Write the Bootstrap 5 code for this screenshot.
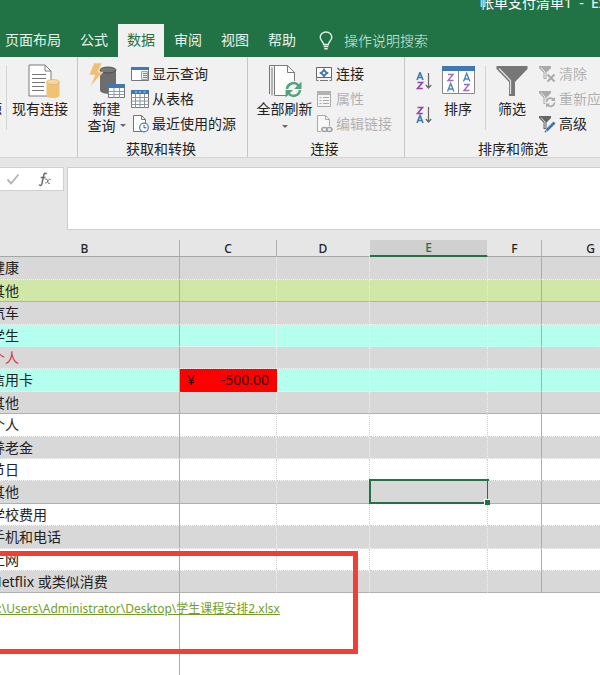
<!DOCTYPE html>
<html lang="zh-CN">
<head>
<meta charset="utf-8">
<meta name="viewport" content="width=device-width, initial-scale=1">
<title>帐单支付清单1 - Excel</title>
<link href="https://cdn.jsdelivr.net/npm/bootstrap@5.3.0/dist/css/bootstrap.min.css" rel="stylesheet">
<style>
body{font-family:"Noto Sans","Noto Sans CJK SC",sans-serif;font-size:14px;line-height:17px;color:#222;background:#fff}
button{font:inherit;color:inherit;background:none;border:0;padding:0;white-space:nowrap}
svg{display:block;flex:none}
.app-head{background:#217346;color:#fff}
.app-title{height:24px;margin-left:80%;line-height:6px;overflow:hidden}
.tab-strip{gap:1px;margin-left:-4px;height:33px}
.tab-strip .nav-link{padding:7px 9px 9px;color:#eaf4ee;line-height:17px;border-radius:0}
.tab-strip .nav-link.active{background:#f1f1f1;color:#217346}
.tell-me{gap:11px;margin-left:13px;padding-bottom:1px;color:#dcebe2;font-weight:300}
.ribbon{background:#f1f1f1;border-bottom:1px solid #d4d4d4;height:101px}
.ribbon-group{flex:none;padding-top:4px}
.ribbon-group + .ribbon-group{border-left:1px solid #c6c6c6}
.g-source{width:117px;margin-left:-40px}
.g-query{width:170px}
.g-link{width:157px}
.g-sort{width:220px}
.g-query .group-body{padding-left:4px}
.g-link .group-body{padding-left:6px}
.g-sort .group-body{padding-left:10px}
.group-body{height:79px}
.group-name{height:17px;padding-right:3px}
.big-btn{display:flex;flex-direction:column;align-items:center;flex:none}
.big-icon{height:39px;display:flex;align-items:center}
.w-src{width:42px}.w-conn{width:66px}.w-new{width:49px}.w-refresh{width:61px}.w-sort{width:46px}.w-filter{width:52px}
.w-conn .big-icon{padding-left:8px}
.inner-rule{width:1px;height:64px;margin-top:5px;background:#d4d4d4}
.small-btn{display:flex;align-items:center;gap:3px;height:25px}
.small-btn:disabled{color:#b1b1b1}
.az-col{width:20px;gap:16px;padding:11px 1px 0}
.caret{width:0;height:0;border:3px solid transparent;border-top-color:#666;border-bottom:0}
.formula{background:#e6e6e6;padding:9px 0 10px;gap:3px}
.fx-box{width:64px;height:24px;background:#fff;border:1px solid #d0d0d0;border-left:0;padding:0 11px 0 6px}
.formula-input{height:63px;resize:none;border:1px solid #cfcfcf;border-right:0;background:#fff;border-radius:0;outline:0;min-width:0}
.sheet{overflow:hidden;position:relative}
.grid{table-layout:fixed;border-collapse:separate;border-spacing:0;width:calc(100% + 50px);margin-left:-10px}
.c-b{width:190px}.c-c{width:97px}.c-d{width:93px}.c-e{width:118px}.c-f{width:54px}
.grid th{background:#e6e6e6;height:17px;padding:0;text-align:center;font-weight:500;font-size:12px;line-height:15px;border-bottom:1px solid #a6a6a6;border-right:1px solid #e6e6e6;color:#222}
.grid thead th.edge{border-right-color:#b0b0b0}
.grid thead th.picked{background:#d0d0d0;color:#217346;border-bottom:2px solid #217346}
.grid td{height:22px;padding:0 0 0 1px;line-height:20px;white-space:nowrap;border-right:1px dotted #ccc;border-bottom:1px dotted #ccc;position:relative}
.grid tbody tr:nth-child(5n+1) td,.grid tbody tr:nth-child(5n+3) td{height:23px}
.grid tbody td:first-child,.grid tbody td:nth-child(5){border-right:1px solid #adadad}
.grid .r-gray td{background:#d8d8d8;border-color:#f2f2f2}
.grid .r-green td{background:#d0e7a7;border-color:#e8f2d8}
.grid .r-aqua td{background:#b5ffee;border-color:#e6f8f4}
.grid .r-rule td{border-bottom:1px solid #b0b0b0}
.grid tbody td.overdue{background:#f00;color:#300;border-color:#f00;padding:0 7px}
.grid td.cursor-cell::after{content:"";position:absolute;inset:-2px -2px -1px -1px;border:2px solid #217346}
.grid td.cursor-cell::before{content:"";position:absolute;right:-3px;bottom:-2px;width:6px;height:6px;background:#217346;border:1px solid #fff;border-width:1px 0 0 1px;z-index:1}
.grid tbody .r-file td,.grid tbody .r-open td{border-bottom:0;border-right-color:transparent}
.grid tbody .r-file td:first-child,.grid tbody .r-open td:first-child{border-right-color:#adadad}
.grid tbody tr.r-file:nth-child(n) td{height:32px;font-size:12px}
.grid tbody tr.r-open:nth-child(n) td{height:51px}
.file-link{color:#6f9f25}
.callout{position:absolute;left:-5px;top:311px;width:363px;height:103px;border:5px solid #f33e38;pointer-events:none}
</style>
</head>
<body>
<header class="app-head overflow-hidden">
  <div class="app-title text-nowrap">帐单支付清单1&nbsp; - &nbsp;Excel</div>
  <nav class="tab-strip nav flex-nowrap text-nowrap">
    <a class="nav-link" href="#">页面布局</a><a class="nav-link" href="#">公式</a><a class="nav-link active" href="#">数据</a><a class="nav-link" href="#">审阅</a><a class="nav-link" href="#">视图</a><a class="nav-link" href="#">帮助</a>
    <button class="tell-me d-flex align-items-center" type="button">
      <svg width="14" height="19" viewBox="0 0 14 19" fill="none" stroke="#e6f2eb" stroke-width="1.4"><path d="M4.6 13.5C4.6 10.8 1.2 9.6 1.2 6.3a5.8 5.3 0 0 1 11.6 0c0 3.3-3.4 4.500-3.400 7.200zM4.600 15.500h4.800M5.300 17.700h3.400"/></svg>
      操作说明搜索</button>
  </nav>
</header>

<section class="ribbon d-flex overflow-hidden" aria-label="数据">
  <div class="ribbon-group g-source">
    <div class="group-body d-flex">
      <button class="big-btn w-src" type="button"><span class="big-icon"></span>其他源</button>
      <span class="inner-rule ms-auto"></span>
      <button class="big-btn w-conn me-1" type="button"><span class="big-icon">
        <svg width="32" height="34" viewBox="0 0 32 34"><path d="M1 1h16l6 6v25H1z" fill="#fff" stroke="#7b7b7b"/><path d="M17 1v6h6" fill="none" stroke="#7b7b7b"/><path d="M4 10.500h14M4 14.500h14M4 18.500h13M4 22.500h12M4 26.500h12" stroke="#777"/><path d="M18.500 18v13.500c0 3.400 13 3.400 13 0V18z" fill="#efc373"/><ellipse cx="25" cy="18" rx="6.500" ry="2.500" fill="#f6d99e" stroke="#e5b35c" stroke-width=".7"/></svg></span>现有连接</button>
    </div>
  </div>

  <div class="ribbon-group g-query">
    <div class="group-body d-flex">
      <button class="big-btn w-new" type="button"><span class="big-icon">
        <svg width="36" height="38" viewBox="0 0 36 38"><path d="M11 8v20c0 5 16 5 16 0V8z" fill="#6d6d6d"/><ellipse cx="19" cy="8" rx="8" ry="3" fill="#777" stroke="#444" stroke-width=".8"/><path d="M5 1h8L9 10h5L1 25l5-12H0z" fill="#f0bf74" stroke="#f5f1e8" stroke-width=".6"/><path d="M19.500 22.500h16v13h-16z" fill="#fff" stroke="#777"/><path d="M19 22h17v4H19z" fill="#3e78b5"/><path d="M25 26v10M30.500 26v10M20 29.500h15M20 32.500h15" stroke="#8f9ba8"/></svg></span>新建<span class="d-flex align-items-center gap-1">查询<span class="caret"></span></span></button>
      <div>
        <button class="small-btn" type="button"><svg width="18" height="16" viewBox="0 0 18 16"><path d="M.5 1.500h17v13H.5z" fill="#fff" stroke="#777"/><path d="M0 1h18v3H0z" fill="#3e78b5"/><path d="M10.500 5.500h6v8h-6z" fill="#e7edf4" stroke="#9aa"/><path d="M12 7.500h4M12 9.500h4M12 11.500h4" stroke="#6d8cae"/></svg>显示查询</button>
        <button class="small-btn" type="button"><svg width="18" height="18" viewBox="0 0 18 18"><path d="M.5.5h17v17H.5z" fill="#fff" stroke="#777"/><path d="M0 0h18v4H0z" fill="#3e78b5"/><path d="M4.500 4v14M9 4v14M13.500 4v14M0 7.500h18M0 11h18M0 14.500h18" stroke="#8c959e"/><path d="M4 2h2M8 2h2M12.500 2h2" stroke="#c8dced"/></svg>从表格</button>
        <button class="small-btn" type="button"><svg width="18" height="18" viewBox="0 0 18 18"><path d="M2.500.5h8l4 4v12h-12z" fill="#fff" stroke="#777"/><path d="M10.500.5v4h4" fill="none" stroke="#777"/><circle cx="13" cy="12.500" r="4.300" fill="#fff" stroke="#4d7fa9" stroke-width="1.200"/><path d="M13 9.800v3h2.400" fill="none" stroke="#345f88"/></svg>最近使用的源</button>
      </div>
    </div>
    <div class="group-name text-center">获取和转换</div>
  </div>

  <div class="ribbon-group g-link">
    <div class="group-body d-flex">
      <button class="big-btn w-refresh" type="button"><span class="big-icon">
        <svg width="34" height="34" viewBox="0 0 34 34"><path d="M1.500 30V1.500h15M4 31.500V3.500" fill="none" stroke="#777"/><path d="M6.500 1.500h13l7 7v23h-20z" fill="#fff" stroke="#7b7b7b"/><path d="M19.500 1.500v7h7" fill="none" stroke="#7b7b7b"/><circle cx="25.500" cy="25.500" r="8.500" fill="#f5f7f5"/><path d="M19 25a6.500 6.500 0 0 1 11.500-3.500M32 26a6.500 6.500 0 0 1-11.500 3.500" fill="none" stroke="#55a37c" stroke-width="2.600"/><path d="M33.500 17.500v7.500h-7.500zM17.500 33.500v-7.500H25z" fill="#55a37c"/></svg></span>全部刷新<span class="caret mt-2"></span></button>
      <div>
        <button class="small-btn" type="button"><svg width="18" height="16" viewBox="0 0 18 16"><path d="M1.500 1.500h15v10h-15z" fill="#fff" stroke="#666"/><path d="M1.500 11.500v3h2M14.500 14.500h2v-3M5 14.500h8" fill="none" stroke="#777"/><path d="M9 2l2 3 3 2-3 2-2 3-2-3-3-2 3-2z" fill="#3e78b5"/><path d="M9 5.500L10.500 7 9 8.500 7.500 7z" fill="#fff"/></svg>连接</button>
        <button class="small-btn" type="button" disabled><svg width="18" height="18" viewBox="0 0 18 18"><path d="M2.500 1.500h13v15h-13z" fill="#f4f4f4" stroke="#aaa"/><path d="M2 1h14v4H2z" fill="#b2b2b2"/><path d="M4.500 7.500h2M8 7.500h6M4.500 10.500h2M8 10.500h6M4.500 13.500h2M8 13.500h6" stroke="#aaa"/></svg>属性</button>
        <button class="small-btn" type="button" disabled><svg width="18" height="18" viewBox="0 0 18 18"><path d="M6 16.500H2.500V.5h8l4 4V11" fill="#f8f8f8" stroke="#aaa"/><path d="M10.500.5v4h4" fill="none" stroke="#aaa"/><g fill="none" stroke="#a0a0a0" stroke-width="1.500"><ellipse cx="9.500" cy="14.500" rx="2.700" ry="2"/><ellipse cx="14.300" cy="14.500" rx="2.700" ry="2"/></g></svg>编辑链接</button>
      </div>
    </div>
    <div class="group-name text-center">连接</div>
  </div>

  <div class="ribbon-group g-sort">
    <div class="group-body d-flex">
      <div class="az-col d-flex flex-column">
        <button type="button" aria-label="升序"><svg width="17" height="18" viewBox="0 0 17 18" fill="none"><path d="M1 8l3-7.500L7 8M2 5.500h4" stroke="#3e78b5" stroke-width="1.600"/><path d="M1.500 10.500h5l-5 6h5.300" stroke="#9148a8" stroke-width="1.600"/><path d="M12.500 1v15M9.800 13l2.700 3 2.700-3" stroke="#666" stroke-width="1.200"/></svg></button>
        <button type="button" aria-label="降序"><svg width="17" height="18" viewBox="0 0 17 18" fill="none"><path d="M1.500 1.500h5l-5 6h5.300" stroke="#9148a8" stroke-width="1.600"/><path d="M1 17l3-7.500L7 17M2 14.500h4" stroke="#3e78b5" stroke-width="1.600"/><path d="M12.500 1v15M9.800 13l2.700 3 2.700-3" stroke="#666" stroke-width="1.200"/></svg></button>
      </div>
      <button class="big-btn w-sort" type="button"><span class="big-icon">
        <svg width="33" height="29" viewBox="0 0 33 29" fill="none"><path d="M.5.5h32v27H.5z" fill="#fff" stroke="#888"/><path d="M0 0h33v5H0z" fill="#3e78b5"/><path d="M16.500 5v23" stroke="#888"/><path d="M6 8.500h5l-5 6h5.500M22 18.500h5l-5 6h5.500" stroke="#a468b8" stroke-width="1.400"/><path d="M5.500 25.500l3.200-8 3.200 8M6.500 23h4.500M21.500 15.500l3.200-8 3.200 8M22.500 13h4.500" stroke="#4b87bd" stroke-width="1.400"/></svg></span>排序</button>
      <span class="inner-rule ms-1"></span>
      <button class="big-btn w-filter" type="button"><span class="big-icon">
        <svg width="32" height="32" viewBox="0 0 32 32"><path d="M.5 1h31v3L19 17v14h-6V17L.5 4z" fill="#777"/><path d="M3 3.500l11.500 12V29" fill="none" stroke="#ddd" stroke-width="1.300"/></svg></span>筛选</button>
      <div>
        <button class="small-btn" type="button" disabled><svg width="18" height="18" viewBox="0 0 18 18"><path d="M1 1h12v2L8.500 7.500V14h-3V7.500L1 3z" fill="#aaa"/><path d="M3 2.500l4 4.500v6" fill="none" stroke="#eee"/><path d="M9.500 9.500l7 7M16.500 9.500l-7 7" stroke="#aaa" stroke-width="2"/></svg>清除</button>
        <button class="small-btn" type="button" disabled><svg width="18" height="18" viewBox="0 0 18 18"><path d="M1 1h12v2L8.500 7.500V14h-3V7.500L1 3z" fill="#aaa"/><path d="M3 2.500l4 4.500v6" fill="none" stroke="#eee"/><circle cx="12.500" cy="12" r="5.500" fill="#f1f1f1"/><path d="M8.500 12a4 4 0 0 1 7-2.500M16.500 12.500a4 4 0 0 1-7 2.500" fill="none" stroke="#aaa" stroke-width="1.600"/><path d="M17 7v4h-4zM8 17.500v-4h4z" fill="#aaa"/></svg>重新应用</button>
        <button class="small-btn" type="button"><svg width="18" height="18" viewBox="0 0 18 18"><path d="M1 1h12v2L8.500 7.500V14h-3V7.500L1 3z" fill="#666"/><path d="M3 2.500l4 4.500v6" fill="none" stroke="#ddd"/><path d="M16.500 7l-8 9" stroke="#f1f1f1" stroke-width="4"/><path d="M16.500 7.500L8.500 15.500" stroke="#3875c0" stroke-width="2.600"/><path d="M6.500 17.500l.5-2.500 2 2z" fill="#3875c0"/></svg>高级</button>
      </div>
    </div>
    <div class="group-name text-center">排序和筛选</div>
  </div>
</section>

<section class="formula d-flex align-items-start">
  <div class="fx-box d-flex justify-content-between align-items-center flex-shrink-0">
    <button type="button" aria-label="输入"><svg width="14" height="12" viewBox="0 0 14 12"><path d="M1.500 6.500l3.500 4 7.500-9" fill="none" stroke="#b5b5b5" stroke-width="1.900"/></svg></button>
    <button type="button" aria-label="插入函数"><svg width="14" height="15" viewBox="0 0 14 15" fill="none" stroke="#666"><path d="M8.500 2.200C7.500.6 6.200 1 5.800 3L4 11.500c-.4 2-1.600 2.500-3 1.300M2.700 5.500h4.800" stroke-width="1.400"/><path d="M7.300 7.300c1.700-.6 2 .3 2.500 2.200s1 2.600 2.200 1.700M12.600 7.200c-1.600-.3-2.600 1.300-3.200 2.400s-1.200 1.700-2.200 1.400"/></svg></button>
  </div>
  <textarea class="formula-input flex-grow-1" aria-label="编辑栏"></textarea>
</section>

<main class="sheet">
  <table class="grid">
    <colgroup><col class="c-b"><col class="c-c"><col class="c-d"><col class="c-e"><col class="c-f"><col></colgroup>
    <thead><tr><th class="edge">B</th><th class="edge">C</th><th>D</th><th class="picked">E</th><th class="edge">F</th><th>G</th></tr></thead>
    <tbody>
      <tr class="r-gray"><td>健康</td><td></td><td></td><td></td><td></td><td></td></tr>
      <tr class="r-green r-rule"><td>其他</td><td></td><td></td><td></td><td></td><td></td></tr>
      <tr class="r-gray"><td>汽车</td><td></td><td></td><td></td><td></td><td></td></tr>
      <tr class="r-aqua"><td>学生</td><td></td><td></td><td></td><td></td><td></td></tr>
      <tr class="r-gray"><td class="text-danger">个人</td><td></td><td></td><td></td><td></td><td></td></tr>
      <tr class="r-aqua"><td>信用卡</td><td class="overdue"><div class="d-flex justify-content-between"><span>¥</span><span>-500.00</span></div></td><td></td><td></td><td></td><td></td></tr>
      <tr class="r-gray r-rule"><td>其他</td><td></td><td></td><td></td><td></td><td></td></tr>
      <tr><td>个人</td><td></td><td></td><td></td><td></td><td></td></tr>
      <tr class="r-gray"><td>养老金</td><td></td><td></td><td></td><td></td><td></td></tr>
      <tr><td>节日</td><td></td><td></td><td></td><td></td><td></td></tr>
      <tr class="r-gray r-rule"><td>其他</td><td></td><td></td><td class="cursor-cell"></td><td></td><td></td></tr>
      <tr><td>学校费用</td><td></td><td></td><td></td><td></td><td></td></tr>
      <tr class="r-gray"><td>手机和电话</td><td></td><td></td><td></td><td></td><td></td></tr>
      <tr><td>上网</td><td></td><td></td><td></td><td></td><td></td></tr>
      <tr class="r-gray r-rule"><td>Netflix 或类似消费</td><td></td><td></td><td></td><td></td><td></td></tr>
      <tr class="r-file"><td><a class="file-link" href="#">C:\Users\Administrator\Desktop\学生课程安排2.xlsx</a></td><td></td><td></td><td></td><td></td><td></td></tr>
      <tr class="r-open"><td></td><td></td><td></td><td></td><td></td><td></td></tr>
    </tbody>
  </table>
  <div class="callout"></div>
</main>
<script src="https://cdn.jsdelivr.net/npm/bootstrap@5.3.0/dist/js/bootstrap.bundle.min.js"></script>
</body>
</html>
